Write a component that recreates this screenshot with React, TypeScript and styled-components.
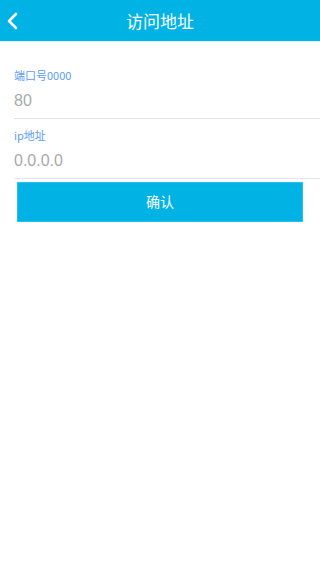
import React from "react";
import styled, { createGlobalStyle } from "styled-components";

const GlobalStyle = createGlobalStyle`
    html, body {
        margin: 0;
        padding: 0;
        background: #ffffff;
        font-family: "Liberation Sans", "Noto Sans CJK SC", sans-serif;
    }
    * {
        box-sizing: border-box;
    }
`;

const Page = styled.div`
    width: 320px;
    min-height: 568px;
    background: #ffffff;
`;

const Header = styled.header`
    position: relative;
    display: flex;
    align-items: center;
    justify-content: center;
    height: 42px;
    background-color: #00b3e4;
    border-bottom: 1px solid #d9eef7;
`;

const BackButton = styled.button`
    position: absolute;
    left: 2px;
    top: 8px;
    display: flex;
    align-items: center;
    justify-content: center;
    width: 20px;
    height: 26px;
    padding: 0;
    border: none;
    background: transparent;
`;

const Title = styled.h1`
    margin: 0;
    color: #ffffff;
    font-size: 17px;
    font-weight: normal;
    font-family: "Noto Sans CJK SC", sans-serif;
    line-height: 22px;
`;

const Form = styled.form`
    display: flex;
    flex-direction: column;
    padding: 17px 0 0 14px;
`;

const Field = styled.div`
    display: flex;
    flex-direction: column;
    padding: 9px 0 6px;
    border-bottom: 1px solid #e4e4e4;
`;

const Label = styled.label`
    color: #5b9df4;
    font-size: 11px;
    line-height: 14px;
    font-family: "Noto Sans CJK SC", sans-serif;
`;

const Input = styled.input`
    margin-top: 8px;
    padding: 0;
    height: 22px;
    border: none;
    outline: none;
    background: transparent;
    font-size: 16px;
    font-family: "Liberation Sans", sans-serif;
    color: #333333;

    &::placeholder {
        color: #a9a9a9;
    }
`;

const Actions = styled.div`
    padding: 3px 17px 0;
`;

const Submit = styled.button`
    display: block;
    width: 100%;
    height: 40px;
    padding: 0 0 2px;
    border: 1px solid #25c2ee;
    background-color: #00b3e4;
    color: #ffffff;
    font-size: 14px;
    font-family: "Noto Sans CJK SC", sans-serif;
`;

export default function App() {
    return (
        <Page>
            <GlobalStyle />
            <Header>
                <BackButton type="button" aria-label="back">
                    <svg width="14" height="20" viewBox="0 0 14 20">
                        <polyline
                            points="11,3 4,10 11,17"
                            fill="none"
                            stroke="#ffffff"
                            strokeWidth="2.6"
                            strokeLinecap="round"
                            strokeLinejoin="round"
                        />
                    </svg>
                </BackButton>
                <Title>访问地址</Title>
            </Header>
            <Form onSubmit={(e) => e.preventDefault()}>
                <Field>
                    <Label>端口号0000</Label>
                    <Input placeholder="80" />
                </Field>
                <Field>
                    <Label>ip地址</Label>
                    <Input placeholder="0.0.0.0" />
                </Field>
            </Form>
            <Actions>
                <Submit type="button">确认</Submit>
            </Actions>
        </Page>
    );
}
